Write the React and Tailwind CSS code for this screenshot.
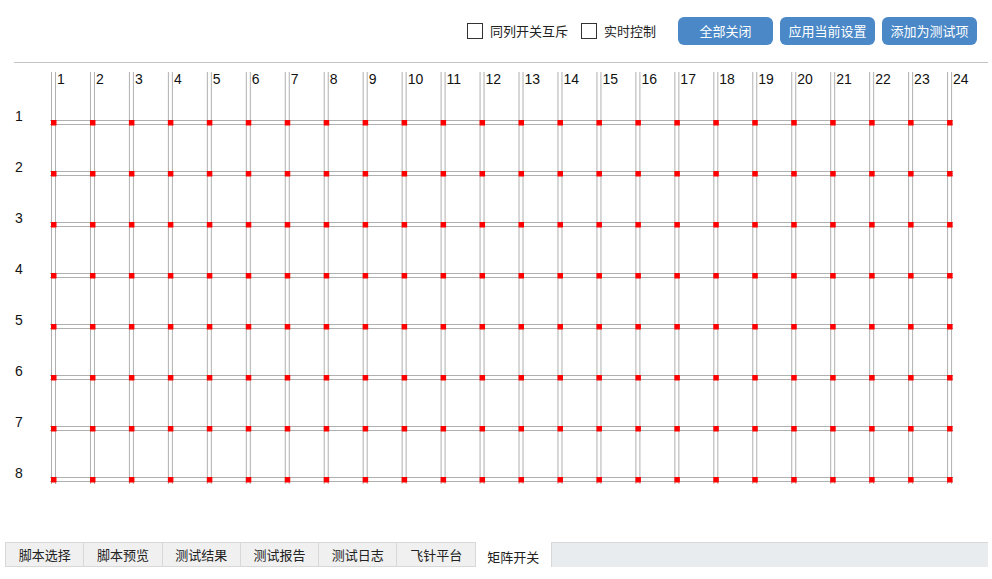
import React from "react";

const COLS = 24;
const ROWS = 8;
const CX0 = 51;
const CDX = 38.96;
const RY0 = 120;
const RDY = 51;

function Checkbox({ label }) {
  return (
    <label className="flex items-center gap-[7px] text-[13px] text-[#222]">
      <span className="w-[16px] h-[16px] border border-[#333] bg-white block" />
      <span>{label}</span>
    </label>
  );
}

function Btn({ children }) {
  return (
    <button className="w-[95px] h-[28px] rounded-[6px] bg-[#4a88c7] text-white text-[13px] flex items-center justify-center">
      {children}
    </button>
  );
}

function MatrixGrid() {
  const lineColor = "#b0b0b0";
  const cols = Array.from({ length: COLS }, (_, i) => CX0 + i * CDX);
  const rows = Array.from({ length: ROWS }, (_, r) => RY0 + r * RDY);
  return (
    <svg width="992" height="427" viewBox="0 63 992 427" className="block">
      {cols.map((x, i) => (
        <g key={"c" + i}>
          <line x1={x + 0.5} y1={72} x2={x + 0.5} y2={484} stroke={lineColor} strokeWidth="1" />
          <line x1={x + 4.5} y1={72} x2={x + 4.5} y2={484} stroke={lineColor} strokeWidth="1" />
          <text
            x={x + 6}
            y={84}
            fontSize="14"
            fill="#111"
            fontFamily="'Liberation Sans', Arial, sans-serif"
          >
            {i + 1}
          </text>
        </g>
      ))}
      {rows.map((y, r) => (
        <g key={"r" + r}>
          <line x1={50} y1={y + 0.5} x2={953} y2={y + 0.5} stroke={lineColor} strokeWidth="1" />
          <line x1={50} y1={y + 4.5} x2={953} y2={y + 4.5} stroke={lineColor} strokeWidth="1" />
          <text
            x={15}
            y={y + 1}
            fontSize="14"
            fill="#111"
            fontFamily="'Liberation Sans', Arial, sans-serif"
          >
            {r + 1}
          </text>
        </g>
      ))}
      {rows.map((y, r) =>
        cols.map((x, i) => (
          <rect key={r + "-" + i} x={x} y={y} width="5.5" height="5.5" fill="#ff0000" />
        ))
      )}
    </svg>
  );
}

const TABS = ["脚本选择", "脚本预览", "测试结果", "测试报告", "测试日志", "飞针平台"];

export default function App() {
  return (
    <div
      className="w-[992px] h-[579px] bg-white overflow-hidden flex flex-col"
      style={{ fontFamily: "'Noto Sans CJK SC', 'Liberation Sans', sans-serif" }}
    >
      <div className="h-[63px] ml-[14px] mr-[4px] border-b border-[#c4c4c4] flex items-center justify-end pr-[11px] pb-[1px]">
        <div className="flex items-center gap-[13px] mr-[22px]">
          <Checkbox label="同列开关互斥" />
          <Checkbox label="实时控制" />
        </div>
        <div className="flex items-center gap-[7px]">
          <Btn>全部关闭</Btn>
          <Btn>应用当前设置</Btn>
          <Btn>添加为测试项</Btn>
        </div>
      </div>
      <MatrixGrid />
      <div className="flex-1" />
      <div className="flex items-stretch ml-[5px] mr-[4px] h-[25px] mb-[12px]">
        {TABS.map((t) => (
          <div
            key={t}
            className="w-[78.3px] bg-[#f0f0f0] border border-[#d8d8d8] border-r-0 first:border-l text-[13px] text-[#222] flex items-center justify-center"
          >
            {t}
          </div>
        ))}
        <div className="w-[76px] bg-white text-[13px] text-[#222] flex items-center justify-center pt-[4px] border-l border-[#d8d8d8]">
          矩阵开关
        </div>
        <div className="flex-1 bg-[#e9ecef] border-t border-l border-[#d8d8d8]" />
      </div>
    </div>
  );
}
